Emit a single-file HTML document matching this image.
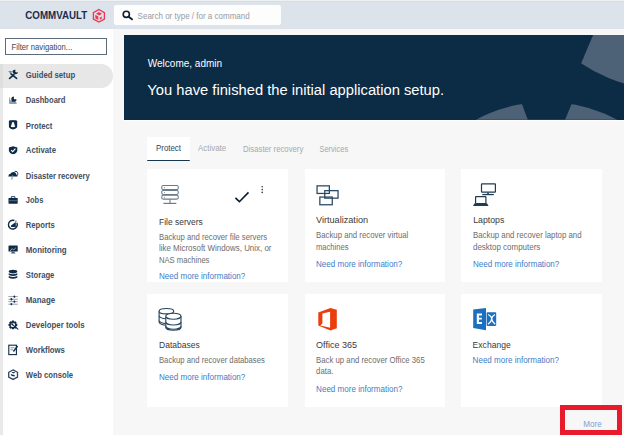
<!DOCTYPE html>
<html><head><meta charset="utf-8">
<style>
*{box-sizing:border-box;margin:0;padding:0}
html,body{width:624px;height:435px;overflow:hidden;background:#f7f7f7;font-family:"Liberation Sans",sans-serif;position:relative}
.abs{position:absolute}
.t{position:absolute;white-space:nowrap;line-height:1}
svg.ov{position:absolute;left:0;top:0}
</style></head><body>
<div class="abs" style="left:0;top:0;width:624px;height:1px;background:#eff0f2"></div><div class="abs" style="left:0;top:1px;width:624px;height:28px;background:#dce3eb"></div><div class="abs" style="left:0;top:1px;width:624px;height:1px;background:#d6dde5"></div><div class="t" style="left:25.30px;top:10.74px;font-size:9.76px;color:#1d2c4e;font-weight:bold;transform-origin:0 8.26px;transform:scaleY(1.1);">COMMVAULT</div>
<div class="abs" style="left:114px;top:5px;width:167px;height:20px;background:#fdfdfd;border-radius:2px"></div><div class="t" style="left:137.60px;top:12.63px;font-size:8.00px;color:#969ba2;font-weight:normal;transform-origin:0 6.77px;transform:scaleY(1.1);">Search or type / for a command</div>
<div class="abs" style="left:0;top:29px;width:113px;height:406px;background:#fff"></div><div class="abs" style="left:0;top:64px;width:113px;height:24px;background:#e7e7e7;border-radius:0 12px 12px 0"></div><div class="abs" style="left:0;top:64px;width:2.6px;height:24px;background:#dfdfdf"></div><div class="abs" style="left:0;top:88px;width:2.6px;height:347px;background:#e9e9e9"></div><div class="abs" style="left:5px;top:38px;width:102px;height:17px;border:1px solid #5d6c7a;background:#fff"></div><div class="t" style="left:11.60px;top:43.88px;font-size:7.70px;color:#3d4752;font-weight:normal;transform-origin:0 6.52px;transform:scaleY(1.1);">Filter navigation...</div>
<div class="t" style="left:25.80px;top:72.47px;font-size:7.72px;color:#3d4e63;font-weight:bold;transform-origin:0 6.53px;transform:scaleY(1.1);">Guided setup</div>
<div class="t" style="left:25.80px;top:97.47px;font-size:7.60px;color:#3d4e63;font-weight:bold;transform-origin:0 6.43px;transform:scaleY(1.1);">Dashboard</div>
<div class="t" style="left:25.80px;top:122.77px;font-size:7.72px;color:#3d4e63;font-weight:bold;transform-origin:0 6.53px;transform:scaleY(1.1);">Protect</div>
<div class="t" style="left:25.80px;top:147.43px;font-size:7.76px;color:#3d4e63;font-weight:bold;transform-origin:0 6.57px;transform:scaleY(1.1);">Activate</div>
<div class="t" style="left:25.80px;top:172.63px;font-size:7.64px;color:#3d4e63;font-weight:bold;transform-origin:0 6.47px;transform:scaleY(1.1);">Disaster recovery</div>
<div class="t" style="left:25.80px;top:197.25px;font-size:7.50px;color:#3d4e63;font-weight:bold;transform-origin:0 6.35px;transform:scaleY(1.1);">Jobs</div>
<div class="t" style="left:25.80px;top:222.20px;font-size:7.68px;color:#3d4e63;font-weight:bold;transform-origin:0 6.50px;transform:scaleY(1.1);">Reports</div>
<div class="t" style="left:25.80px;top:246.91px;font-size:7.90px;color:#3d4e63;font-weight:bold;transform-origin:0 6.69px;transform:scaleY(1.1);">Monitoring</div>
<div class="t" style="left:25.80px;top:272.10px;font-size:7.68px;color:#3d4e63;font-weight:bold;transform-origin:0 6.50px;transform:scaleY(1.1);">Storage</div>
<div class="t" style="left:25.80px;top:297.21px;font-size:7.90px;color:#3d4e63;font-weight:bold;transform-origin:0 6.69px;transform:scaleY(1.1);">Manage</div>
<div class="t" style="left:25.80px;top:321.75px;font-size:7.85px;color:#3d4e63;font-weight:bold;transform-origin:0 6.65px;transform:scaleY(1.1);">Developer tools</div>
<div class="t" style="left:25.80px;top:346.91px;font-size:7.78px;color:#3d4e63;font-weight:bold;transform-origin:0 6.59px;transform:scaleY(1.1);">Workflows</div>
<div class="t" style="left:25.80px;top:371.59px;font-size:7.69px;color:#3d4e63;font-weight:bold;transform-origin:0 6.51px;transform:scaleY(1.1);">Web console</div>
<div class="abs" style="left:124px;top:35px;width:500px;height:85px;background:#0c2c45"></div><div class="abs" style="left:124px;top:120px;width:500px;height:1px;background:#fcfcfc"></div><div class="t" style="left:147.80px;top:58.73px;font-size:10.00px;color:#ffffff;font-weight:normal;transform-origin:0 8.46px;transform:scaleY(1.1);">Welcome, admin</div>
<div class="t" style="left:147.30px;top:83.22px;font-size:14.74px;color:#ffffff;font-weight:normal;transform-origin:0 12.48px;transform:scaleY(1.04);">You have finished the initial application setup.</div>
<div class="abs" style="left:147px;top:137px;width:43px;height:24px;background:#fff;border-bottom:1.7px solid #153550;border-radius:0 0 1px 1px"></div><div class="t" style="left:156.00px;top:145.41px;font-size:7.90px;color:#33445a;font-weight:normal;transform-origin:0 6.69px;transform:scaleY(1.1);">Protect</div>
<div class="t" style="left:198.00px;top:145.37px;font-size:7.95px;color:#a4a9af;font-weight:normal;transform-origin:0 6.73px;transform:scaleY(1.1);">Activate</div>
<div class="t" style="left:243.00px;top:145.54px;font-size:7.75px;color:#a4a9af;font-weight:normal;transform-origin:0 6.56px;transform:scaleY(1.1);">Disaster recovery</div>
<div class="t" style="left:319.40px;top:145.75px;font-size:7.50px;color:#a4a9af;font-weight:normal;transform-origin:0 6.35px;transform:scaleY(1.1);">Services</div>
<div class="abs" style="left:147px;top:169px;width:141px;height:113px;background:#fff"></div><div class="abs" style="left:305px;top:169px;width:140px;height:113px;background:#fff"></div><div class="abs" style="left:461px;top:169px;width:141px;height:113px;background:#fff"></div><div class="abs" style="left:147px;top:294px;width:141px;height:113px;background:#fff"></div><div class="abs" style="left:305px;top:294px;width:140px;height:113px;background:#fff"></div><div class="abs" style="left:461px;top:294px;width:141px;height:113px;background:#fff"></div><div class="t" style="left:159.00px;top:217.94px;font-size:8.46px;color:#3a3a3a;font-weight:normal;transform-origin:0 7.16px;transform:scaleY(1.11);">File servers</div>
<div class="t" style="left:159.00px;top:234.27px;font-size:7.72px;color:#6d6d6d;font-weight:normal;transform-origin:0 6.53px;transform:scaleY(1.1);">Backup and recover file servers</div>
<div class="t" style="left:159.00px;top:245.27px;font-size:7.95px;color:#6d6d6d;font-weight:normal;transform-origin:0 6.73px;transform:scaleY(1.1);">like Microsoft Windows, Unix, or</div>
<div class="t" style="left:159.00px;top:256.73px;font-size:7.64px;color:#6d6d6d;font-weight:normal;transform-origin:0 6.47px;transform:scaleY(1.1);">NAS machines</div>
<div class="t" style="left:159.00px;top:273.39px;font-size:8.05px;color:#3f7cc6;font-weight:normal;transform-origin:0 6.81px;transform:scaleY(1.1);">Need more information?</div>
<div class="t" style="left:316.00px;top:215.77px;font-size:9.13px;color:#3a3a3a;font-weight:normal;transform-origin:0 7.73px;transform:scaleY(1.03);">Virtualization</div>
<div class="t" style="left:316.00px;top:232.49px;font-size:7.81px;color:#6d6d6d;font-weight:normal;transform-origin:0 6.61px;transform:scaleY(1.1);">Backup and recover virtual</div>
<div class="t" style="left:316.00px;top:243.88px;font-size:7.59px;color:#6d6d6d;font-weight:normal;transform-origin:0 6.42px;transform:scaleY(1.1);">machines</div>
<div class="t" style="left:316.00px;top:260.99px;font-size:8.05px;color:#3f7cc6;font-weight:normal;transform-origin:0 6.81px;transform:scaleY(1.1);">Need more information?</div>
<div class="t" style="left:473.20px;top:215.88px;font-size:8.77px;color:#3a3a3a;font-weight:normal;transform-origin:0 7.42px;transform:scaleY(1.07);">Laptops</div>
<div class="t" style="left:473.00px;top:232.45px;font-size:7.85px;color:#6d6d6d;font-weight:normal;transform-origin:0 6.65px;transform:scaleY(1.1);">Backup and recover laptop and</div>
<div class="t" style="left:473.00px;top:243.55px;font-size:7.97px;color:#6d6d6d;font-weight:normal;transform-origin:0 6.75px;transform:scaleY(1.1);">desktop computers</div>
<div class="t" style="left:473.00px;top:260.99px;font-size:8.05px;color:#3f7cc6;font-weight:normal;transform-origin:0 6.81px;transform:scaleY(1.1);">Need more information?</div>
<div class="t" style="left:159.00px;top:341.28px;font-size:8.53px;color:#3a3a3a;font-weight:normal;transform-origin:0 7.22px;transform:scaleY(1.1);">Databases</div>
<div class="t" style="left:159.00px;top:357.20px;font-size:7.68px;color:#6d6d6d;font-weight:normal;transform-origin:0 6.50px;transform:scaleY(1.1);">Backup and recover databases</div>
<div class="t" style="left:159.00px;top:373.99px;font-size:8.05px;color:#3f7cc6;font-weight:normal;transform-origin:0 6.81px;transform:scaleY(1.1);">Need more information?</div>
<div class="t" style="left:316.10px;top:340.66px;font-size:9.03px;color:#3a3a3a;font-weight:normal;transform-origin:0 7.64px;transform:scaleY(1.04);">Office 365</div>
<div class="t" style="left:316.10px;top:357.11px;font-size:7.78px;color:#6d6d6d;font-weight:normal;transform-origin:0 6.59px;transform:scaleY(1.1);">Back up and recover Office 365</div>
<div class="t" style="left:316.10px;top:368.41px;font-size:7.78px;color:#6d6d6d;font-weight:normal;transform-origin:0 6.59px;transform:scaleY(1.1);">data.</div>
<div class="t" style="left:316.10px;top:385.59px;font-size:8.05px;color:#3f7cc6;font-weight:normal;transform-origin:0 6.81px;transform:scaleY(1.1);">Need more information?</div>
<div class="t" style="left:472.60px;top:341.23px;font-size:8.59px;color:#3a3a3a;font-weight:normal;transform-origin:0 7.27px;transform:scaleY(1.1);">Exchange</div>
<div class="t" style="left:472.60px;top:357.39px;font-size:8.05px;color:#3f7cc6;font-weight:normal;transform-origin:0 6.81px;transform:scaleY(1.1);">Need more information?</div>
<div class="abs" style="left:560px;top:405px;width:62px;height:30px;border:5px solid #e81a2b"></div><div class="t" style="left:583.20px;top:421.03px;font-size:8.12px;color:#79a2d6;font-weight:normal;transform-origin:0 6.87px;transform:scaleY(1.18);">More</div>

<svg class="ov" width="624" height="435" viewBox="0 0 624 435">
<defs><clipPath id="bn"><rect x="124" y="35" width="500" height="84.7"/></clipPath></defs>
<!-- banner gears -->
<g clip-path="url(#bn)">
 <circle cx="546.5" cy="251" r="149" fill="#4e6277"/>
 <polygon points="516.7,90 527.8,119.7 565.1,119.7 577.4,90" fill="#0c2c45"/>
 <circle cx="671.5" cy="-74" r="164.5" fill="#4e6277"/>
 <polygon points="595.2,30 578.3,70 480,70 480,30" fill="#0c2c45"/>
</g>
<!-- logo hexagon -->
<polygon points="98.9,9.5 104.4,12.7 104.4,19 98.9,22.1 93.4,19 93.4,12.7" fill="none" stroke="#ef3656" stroke-width="1.35"/>
<g fill="#ef3656">
 <polygon points="98.9,12 102,13.8 99.3,15.5 96,13.7"/>
 <polygon points="95.3,14.8 98.3,16.5 98.3,20 95.3,18.3"/>
 <polygon points="99.8,17.5 101.8,16.4 101.8,18.6 99.8,19.7"/>
</g>
<!-- search icon -->
<g fill="none" stroke="#0e1f33" stroke-width="1.6" stroke-linecap="round">
 <circle cx="126.3" cy="14.3" r="3.1"/>
 <line x1="128.6" y1="16.7" x2="132" y2="19.3" stroke-width="1.9"/>
</g>

<!-- sidebar icons -->
<g fill="#0f2b47" stroke="none">
 <!-- guided setup: tools -->
 <polygon points="8.2,70.9 12,70.9 10.8,74.3" fill="#7b8c9e"/>
 <line x1="11" y1="73.9" x2="16.6" y2="78.4" stroke="#0f2b47" stroke-width="1.6" stroke-linecap="round"/>
 <line x1="14" y1="74.6" x2="9.6" y2="78.4" stroke="#0f2b47" stroke-width="1.6" stroke-linecap="round"/>
 <path d="M12.4,71.6 q0.3,2.6 3,2.7 q2.4,0 2.7,-2.4 l-1.3,0.6 l-1.4,-0.4 l-0.2,-1.3 l0.6,-0.8 q-2.9,-0.6 -3.4,1.6z"/>
 <!-- dashboard -->
 <path d="M9.6,97.5 V103.5 H16.5" fill="none" stroke="#8797a6" stroke-width="0.9"/>
 <polygon points="9.6,103.5 9.6,99.5 11.5,101 13,100.5 16.5,102.3 16.5,103.5" fill="#8f9eac"/>
 <path d="M13.9,96.6 a2.6,2.6 0 1 0 2.6,2.6 h-2.6 z"/>
 <!-- protect badge -->
 <path d="M8.9,120.9 q0.6,-0.9 1.7,-0.7 q1.2,0.3 2.4,-0.3 q1.2,0.6 2.4,0.3 q1.1,-0.2 1.8,0.7 v5.5 q0,1.9 -4.2,3.1 q-4.1,-1.2 -4.1,-3.1 z"/>
 <path d="M12.1,122.2 h1.8 q0.5,2.3 1.3,4.5 q-2.2,0.9 -4.4,0 q0.8,-2.2 1.3,-4.5 z" fill="#fff"/>
 <!-- activate shield -->
 <path d="M13.1,146.2 l4.2,1.4 v2.6 q0,2.9 -4.2,4.1 q-4.2,-1.2 -4.2,-4.1 v-2.6 z"/>
 <polyline points="11.1,150.2 12.7,151.7 15.4,148.6" fill="none" stroke="#fff" stroke-width="1.1"/>
 <!-- disaster recovery cloud -->
 <path d="M8.3,176.5 q0,-2.6 2.4,-2.9 q1,-2 3.2,-1.6 q2.2,0.3 2.4,2.5 q1.3,0.4 1.2,2 z"/>
 <path d="M12.6,175.5 l-0.9,4.2" stroke="#8e9cab" stroke-width="1.2"/>
 <path d="M14.6,171.3 q3,-0.5 3.2,2.2 q0,1.5 -1,2.3" fill="none" stroke="#0f2b47" stroke-width="0.9"/>
 <!-- jobs briefcase -->
 <rect x="8.5" y="198" width="9.2" height="5.7" rx="0.6"/>
 <path d="M11.3,198 v-1.3 h3.6 v1.3" fill="none" stroke="#0f2b47" stroke-width="0.9"/>
 <rect x="8.5" y="200.4" width="9.2" height="0.7" fill="#6f8193"/>
 <!-- reports -->
 <path d="M14.35,220.52 A4.4,4.4 0 1 0 16.84,222.79" fill="none" stroke="#0f2b47" stroke-width="1.4"/><circle cx="15.9" cy="221.2" r="0.6"/>
 <polygon points="11,227 15.8,227 15.8,222 11,225.5"/>
 <!-- monitoring -->
 <rect x="8.5" y="245.4" width="9.2" height="6.2" rx="0.6"/>
 <polyline points="10.1,251 12.2,248.6 13.6,250 15.9,247.8" fill="none" stroke="#aab6c2" stroke-width="0.9"/>
 <rect x="11.6" y="251.6" width="3" height="1.4" fill="#3b5269"/>
 <rect x="10.8" y="252.8" width="4.6" height="0.8" fill="#6c7f92"/>
 <!-- storage -->
 <ellipse cx="13" cy="271.6" rx="4.3" ry="1.8"/>
 <path d="M8.7,273.3 q4.3,2 8.6,0 v1.6 q-4.3,2 -8.6,0 z"/>
 <path d="M8.7,276.1 q4.3,2 8.6,0 v1.6 q-4.3,2 -8.6,0 z"/>
 <!-- manage sliders -->
 <g stroke="#0f2b47" stroke-width="0.8" opacity="0.55">
  <line x1="8.4" y1="296.6" x2="17.8" y2="296.6"/><line x1="8.4" y1="299.3" x2="17.8" y2="299.3"/>
  <line x1="8.4" y1="301.6" x2="17.8" y2="301.6"/><line x1="8.4" y1="304.2" x2="17.8" y2="304.2"/>
 </g>
 <ellipse cx="14.4" cy="296.6" rx="0.9" ry="1.2"/><ellipse cx="11.4" cy="299.2" rx="0.9" ry="1.2"/>
 <ellipse cx="14.4" cy="301.6" rx="0.9" ry="1.2"/><ellipse cx="11.4" cy="304.1" rx="0.9" ry="1.2"/>
 <!-- developer tools -->
 <polygon points="11.51,321.80 12.01,320.49 13.79,320.49 14.29,321.80 14.11,321.72 15.39,321.15 16.65,322.41 16.08,323.69 16.00,323.51 17.31,324.01 17.31,325.79 16.00,326.29 16.08,326.11 16.65,327.39 15.39,328.65 14.11,328.08 14.29,328.00 13.79,329.31 12.01,329.31 11.51,328.00 11.69,328.08 10.41,328.65 9.15,327.39 9.72,326.11 9.80,326.29 8.49,325.79 8.49,324.01 9.80,323.51 9.72,323.69 9.15,322.41 10.41,321.15 11.69,321.72"/>
 <circle cx="12.9" cy="324.9" r="2.2" fill="#fff"/>
 <line x1="12.2" y1="324.4" x2="17.9" y2="329.1" stroke="#0f2b47" stroke-width="1.2" stroke-linecap="round"/>
 <polygon points="10.9,323.2 13.6,323.4 12.1,325.8"/>
 <!-- workflows -->
 <rect x="8.8" y="345.2" width="7.6" height="9.4" fill="none" stroke="#0f2b47" stroke-width="1.1"/>
 <line x1="10.5" y1="347.8" x2="14.5" y2="347.8" stroke="#51667a" stroke-width="0.7"/>
 <line x1="10.5" y1="349.8" x2="13" y2="349.8" stroke="#51667a" stroke-width="0.7"/>
 <line x1="13.4" y1="351.5" x2="17.6" y2="346" stroke="#0f2b47" stroke-width="1.3"/>
 <!-- web console -->
 <polygon points="13.1,369.9 17.5,372.3 17.5,377 13.1,379.4 8.7,377 8.7,372.3" fill="none" stroke="#2f4860" stroke-width="1.3"/>
 <ellipse cx="13.4" cy="372.6" rx="1.8" ry="0.7"/>
 <path d="M10.6,374 q0.6,2.6 2.6,2.3 l1.4,0.2 v-1.5 l-2.4,-0.4 z"/>
</g>

<!-- card icons -->
<rect x="162" y="188.8" width="16" height="7.4" fill="#b3bec7"/>
<g fill="#fff" stroke="#6a7d8c" stroke-width="1.05">
 <rect x="161.7" y="185.5" width="16.6" height="4.1" rx="1.6"/>
 <rect x="161.7" y="190.5" width="16.6" height="3.9" rx="1.6"/>
 <rect x="161.7" y="195.3" width="16.6" height="3.8" rx="1.6"/>
</g>
<g stroke="#6a7d8c" stroke-width="1.1">
 <line x1="170" y1="199.2" x2="170" y2="203"/>
 <line x1="163.4" y1="203.4" x2="176.3" y2="203.4" stroke-width="1.2"/>
</g>
<g fill="#6a7d8c"><circle cx="164.4" cy="187.6" r="0.55"/><circle cx="164.4" cy="192.5" r="0.55"/><circle cx="164.4" cy="197.2" r="0.55"/></g>
<polyline points="235.4,197.9 239.4,201.7 248.5,192.4" fill="none" stroke="#0b1c2e" stroke-width="1.6"/>
<g fill="#2b3b4b"><circle cx="262.2" cy="186.8" r="0.8"/><circle cx="262.2" cy="189.6" r="0.8"/><circle cx="262.2" cy="192.4" r="0.8"/></g>

<g fill="none" stroke="#294760" stroke-width="1.25">
 <rect x="317.05" y="185.85" width="12.3" height="7.6"/>
 <rect x="324.75" y="190.65" width="13.3" height="7.5"/>
 <rect x="319.85" y="197.05" width="12.4" height="7.7"/>
</g>

<g fill="none" stroke="#1f3c55" stroke-width="1.2">
 <rect x="481.5" y="183.8" width="13.9" height="8.4" rx="0.5"/>
 <rect x="475.6" y="196.6" width="10.3" height="6.9" rx="0.4"/>
</g>
<g fill="#1f3c55">
 <rect x="487.2" y="192.5" width="1.6" height="1.6"/>
 <rect x="482.3" y="193.9" width="11.5" height="1.3"/>
 <polygon points="473,206.1 474.6,203.3 487,203.3 488.6,206.1"/>
</g>

<g fill="#fff" stroke="#2a475e" stroke-width="1.15">
 <path d="M159.1,311.2 v10.6 q0,2.6 6.5,3.5"/>
 <path d="M159.1,316 q1.5,2.4 6.5,2.8" fill="none"/>
 <path d="M159.1,320.8 q1.5,2.4 6.5,2.8" fill="none"/>
 <ellipse cx="166.4" cy="311.2" rx="7.3" ry="2.7"/>
 <path d="M165.8,316.2 v11 a7.6,3 0 0 0 15.2,0 v-11"/>
 <path d="M165.8,322 a7.6,3 0 0 0 15.2,0" fill="none"/>
 <path d="M165.8,326.2 a7.6,3 0 0 0 15.2,0" fill="none"/>
 <ellipse cx="173.4" cy="316.2" rx="7.6" ry="3"/>
</g>

<path d="M318.3,312.6 L330.4,307.9 L336.8,309.8 L336.8,328.2 L330.4,330.4 L318.3,325.6 Z M322.4,313.6 L322.4,323.6 L320.3,325.4 L330.1,327.8 L330.1,311.7 Z" fill="#ea3e0c" fill-rule="evenodd"/>

<g fill="#1b6fc1">
 <polygon points="473.2,309.4 486,307.9 486,330.3 473.2,328.1"/>
 <rect x="486.6" y="312.3" width="9.6" height="13.6" rx="0.8"/>
</g>
<g fill="#fff">
 <path d="M476.8,313.4 h5.2 v2 h-3.1 v2.4 h2.9 v1.8 h-2.9 v2.5 h3.1 v2 h-5.2 z"/>
</g>
<g fill="none" stroke="#fff" stroke-width="1.2">
 <path d="M488.3,314.6 q3.6,2.2 3.6,4.7 q0,2.5 3.3,4.9 M494.9,314.6 q-3.4,2.2 -3.4,4.7 q0,2.5 -3.5,4.9"/>
</g>
</svg>

</body></html>
